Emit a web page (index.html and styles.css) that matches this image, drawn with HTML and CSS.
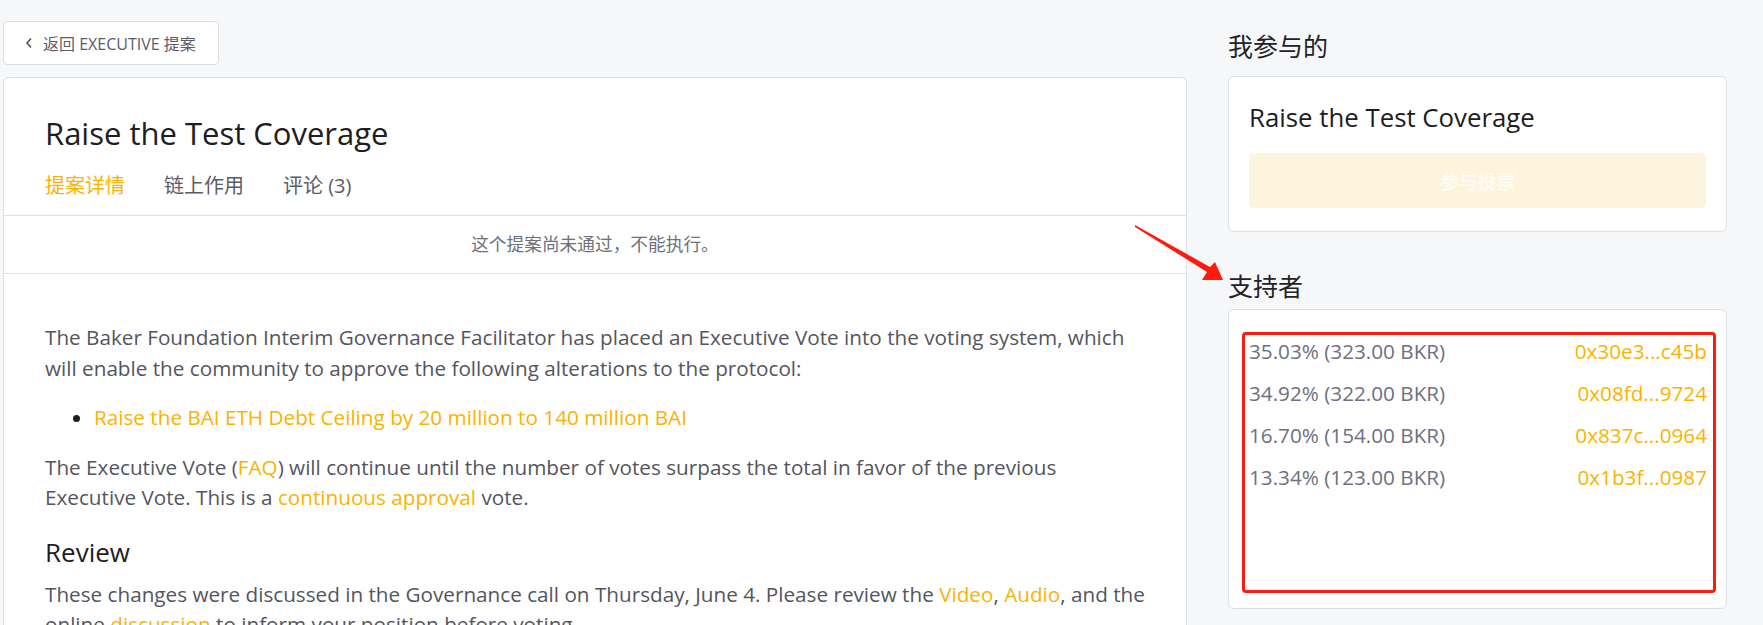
FILE: index.html
```html
<!DOCTYPE html>
<html lang="zh-CN">
<head>
    <meta charset="UTF-8">
    <meta name="viewport" content="width=device-width, initial-scale=1.0">
    <title>Raise the Test Coverage</title>
    <link rel="stylesheet" href="styles.css">
</head>
<body>
    <div class="page">
        <div class="main">
            <a class="back" href="#">
                <svg class="chevron" width="8" height="12" viewBox="0 0 8 12"><path d="M6 1.5L2 6l4 4.5" fill="none" stroke="#555" stroke-width="1.6"/></svg>
                返回 EXECUTIVE 提案
            </a>
            <div class="card proposal">
                <div class="proposal-head">
                    <h1>Raise the Test Coverage</h1>
                    <div class="tabs">
                        <a class="tab active" href="#">提案详情</a>
                        <a class="tab" href="#">链上作用</a>
                        <a class="tab" href="#">评论 (3)</a>
                    </div>
                </div>
                <div class="notice">这个提案尚未通过，不能执行。</div>
                <div class="content">
                    <p>The Baker Foundation Interim Governance Facilitator has placed an Executive Vote into the voting system, which will enable the community to approve the following alterations to the protocol:</p>
                    <ul>
                        <li><a href="#">Raise the BAI ETH Debt Ceiling by 20 million to 140 million BAI</a></li>
                    </ul>
                    <p>The Executive Vote (<a href="#">FAQ</a>) will continue until the number of votes surpass the total in favor of the previous Executive Vote. This is a <a href="#">continuous approval</a> vote.</p>
                    <h2>Review</h2>
                    <p>These changes were discussed in the Governance call on Thursday, June 4. Please review the <a href="#">Video</a>, <a href="#">Audio</a>, and the online <a href="#">discussion</a> to inform your position before voting.</p>
                </div>
            </div>
        </div>

        <div class="side">
            <h3>我参与的</h3>
            <div class="card side-card">
                <div class="side-title">Raise the Test Coverage</div>
                <button class="vote-btn" disabled>参与投票</button>
            </div>

            <h3 class="supporters-head">支持者</h3>
            <div class="card side-card supporters">
                <div class="marked">
                    <div class="supporter"><span>35.03% (323.00 BKR)</span><a href="#">0x30e3...c45b</a></div>
                    <div class="supporter"><span>34.92% (322.00 BKR)</span><a href="#">0x08fd...9724</a></div>
                    <div class="supporter"><span>16.70% (154.00 BKR)</span><a href="#">0x837c...0964</a></div>
                    <div class="supporter"><span>13.34% (123.00 BKR)</span><a href="#">0x1b3f...0987</a></div>
                </div>
            </div>
        </div>
    </div>

    <svg class="arrow" width="100" height="66" viewBox="0 0 100 66">
        <polygon points="5,5 80,47 85,42 93,60 72,60 77,52 5,7" fill="#ff1a0e"/>
    </svg>
</body>
</html>
```

FILE: styles.css
```css
body {
    margin: 0;
    background-color: #f6f7f9;
    font-family: "Open Sans", "Noto Sans CJK SC", sans-serif;
    color: #54555f;
}
a {
    color: #fab300;
    text-decoration: none;
}
.page {
    display: flex;
    align-items: flex-start;
    gap: 41px;
    padding: 21px 36px 0 3px;
}
.main {
    width: 1184px;
    flex-shrink: 0;
}
.side {
    flex: 1;
}
.card {
    background: #ffffff;
    border: 1px solid #dcdfe5;
    border-radius: 6px;
}
.back {
    display: inline-flex;
    align-items: center;
    gap: 10px;
    box-sizing: border-box;
    height: 44px;
    width: 216px;
    padding: 0 0 0 21px;
    background: #ffffff;
    border: 1px solid #dcdfe5;
    border-radius: 4px;
    color: #5b5c66;
    font-size: 16px;
}
.proposal {
    margin-top: 12px;
}
.proposal-head {
    padding: 37px 41px 0;
    border-bottom: 1px solid #dcdfe5;
}
h1 {
    margin: 0;
    font-size: 31px;
    font-weight: 400;
    line-height: 36px;
    color: #1d1d22;
}
.tabs {
    display: flex;
    gap: 39px;
    padding: 21px 0 15px;
}
.tab {
    font-size: 20px;
    line-height: 28px;
    color: #5b5c66;
}
.tab.active {
    color: #fab300;
}
.notice {
    height: 57px;
    line-height: 57px;
    text-align: center;
    font-size: 17.7px;
    color: #6f7079;
    border-bottom: 1px solid #dcdfe5;
}
.content {
    padding: 48px 35px 0 41px;
    font-size: 20.7px;
    line-height: 30.5px;
}
.content p {
    margin: 0 0 19px;
}
.content ul {
    margin: 0 0 19px;
    padding-left: 49px;
    color: #1d1d22;
}
.content h2 {
    margin: 22px 0 10px;
    font-size: 26px;
    font-weight: 400;
    line-height: 34px;
    color: #1d1d22;
}
h3 {
    margin: 10px 0 15px;
    font-size: 25px;
    font-weight: 400;
    line-height: 30px;
    color: #222227;
}
.side-card {
    padding: 21px 20px 23px;
}
.side-title {
    font-size: 25.8px;
    line-height: 38px;
    color: #1d1d22;
}
.vote-btn {
    display: block;
    width: 100%;
    height: 55px;
    margin-top: 17px;
    border: none;
    border-radius: 5px;
    background: #fdf4de;
    color: #ffffff;
    font-family: inherit;
    font-size: 19px;
}
.supporters-head {
    margin-top: 39px;
    margin-bottom: 8px;
}
.supporters {
    padding: 22px 10px 15px 13px;
}
.marked {
    display: flex;
    flex-direction: column;
    gap: 10px;
    height: 252px;
    padding: 0 6px 3px 4px;
    border: 3px solid #ff1a0e;
    border-radius: 4px;
}
.supporter {
    display: flex;
    justify-content: space-between;
    font-size: 20.7px;
    line-height: 32px;
    color: #6f7080;
}
.arrow {
    position: absolute;
    left: 1130px;
    top: 220px;
}
```
